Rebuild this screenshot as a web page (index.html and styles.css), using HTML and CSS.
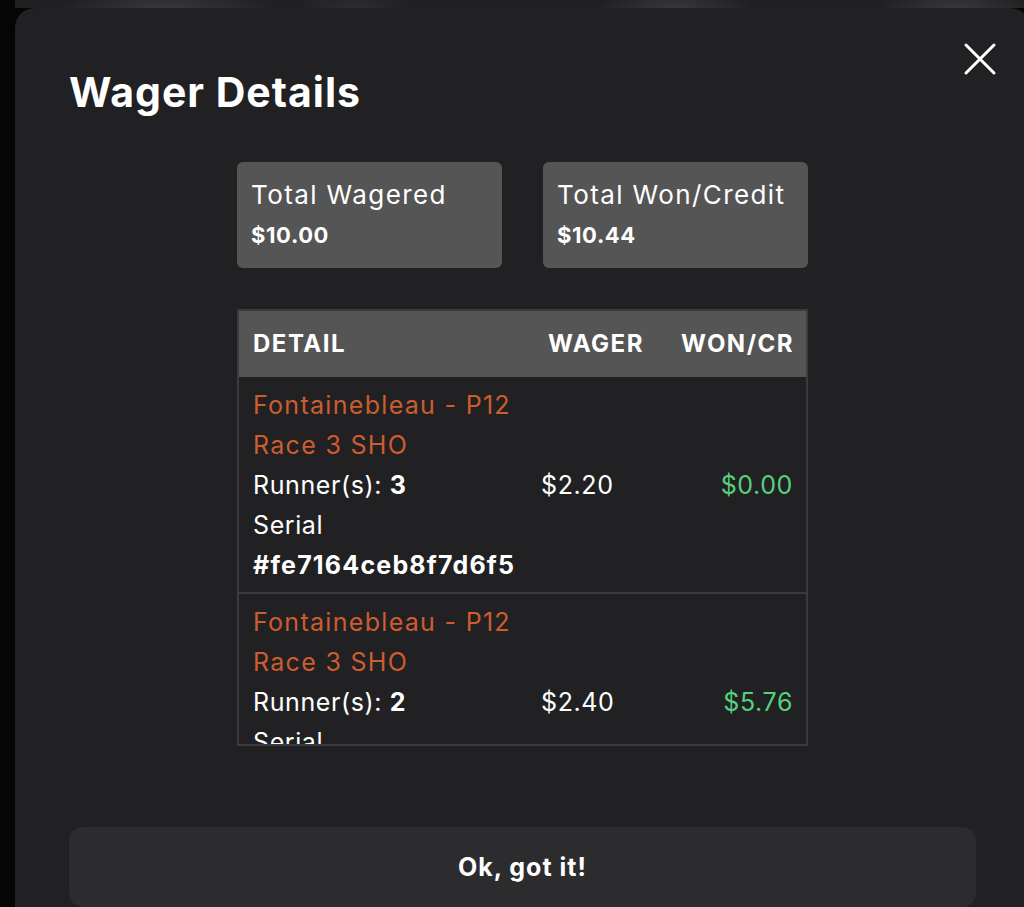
FILE: index.html
```html
<!DOCTYPE html>
<html lang="en">
<head>
    <meta charset="UTF-8">
    <meta name="viewport" content="width=device-width, initial-scale=1.0">
    <title>Wager Details</title>
    <link rel="stylesheet" href="styles.css">
</head>
<body>
    <div class="backdrop"></div>
    <div class="modal">
        <button class="close-btn" aria-label="Close">
            <svg width="34" height="34" viewBox="0 0 34 34">
                <path d="M3 3 L31 31 M31 3 L3 31" stroke="#fff" stroke-width="3" stroke-linecap="round" fill="none"/>
            </svg>
        </button>
        <h1 class="title">Wager Details</h1>
        <div class="totals">
            <div class="total-card">
                <div class="label">Total Wagered</div>
                <div class="amount">$10.00</div>
            </div>
            <div class="total-card">
                <div class="label">Total Won/Credit</div>
                <div class="amount">$10.44</div>
            </div>
        </div>
        <div class="table-wrap">
            <table class="wagers">
                <thead>
                    <tr>
                        <th class="col-detail">Detail</th>
                        <th class="col-wager">Wager</th>
                        <th class="col-won">Won/Cr</th>
                    </tr>
                </thead>
                <tbody>
                    <tr>
                        <td class="col-detail">
                            <div class="race">Fontainebleau - P12</div>
                            <div class="race">Race 3 SHO</div>
                            <div>Runner(s): <b>3</b></div>
                            <div>Serial</div>
                            <div><b>#fe7164ceb8f7d6f5</b></div>
                        </td>
                        <td class="col-wager">$2.20</td>
                        <td class="col-won">$0.00</td>
                    </tr>
                    <tr>
                        <td class="col-detail">
                            <div class="race">Fontainebleau - P12</div>
                            <div class="race">Race 3 SHO</div>
                            <div>Runner(s): <b>2</b></div>
                            <div>Serial</div>
                            <div><b>#a93c10d2e64b7f08</b></div>
                        </td>
                        <td class="col-wager">$2.40</td>
                        <td class="col-won">$5.76</td>
                    </tr>
                </tbody>
            </table>
        </div>
        <button class="ok-btn">Ok, got it!</button>
    </div>
</body>
</html>
```

FILE: styles.css
```css
* {
    margin: 0;
    padding: 0;
    box-sizing: border-box;
    font-family: 'Inter', 'DejaVu Sans', sans-serif;
}
body {
    height: 907px;
    background: #050505;
    color: #fff;
    overflow: hidden;
}
.backdrop {
    height: 8px;
    margin-left: 15px;
    background:
        radial-gradient(ellipse 110px 20px at 150px 8px, #39393b, transparent),
        radial-gradient(ellipse 60px 20px at 340px 8px, #2e2e30, transparent),
        radial-gradient(ellipse 80px 20px at 660px 8px, #38383a, transparent),
        radial-gradient(ellipse 80px 20px at 940px 8px, #38383a, transparent),
        #202022;
}
.modal {
    position: relative;
    width: 1015px;
    height: 920px;
    margin-left: 15px;
    padding: 0 54px;
    background: #212123;
    border-radius: 20px 20px 0 0;
}
.close-btn {
    position: absolute;
    top: 34px;
    right: 33px;
    background: none;
    border: none;
    cursor: pointer;
    display: flex;
}
.title {
    padding-top: 60px;
    font-size: 41px;
    font-weight: 700;
    line-height: 48px;
    letter-spacing: 1px;
}
.totals {
    display: flex;
    justify-content: center;
    gap: 41px;
    margin-top: 46px;
}
.total-card {
    width: 265px;
    height: 106px;
    padding: 13px 14px;
    background: #555555;
    border-radius: 6px;
}
.label {
    font-size: 26px;
    line-height: 40px;
    letter-spacing: 1.4px;
}
.amount {
    font-size: 22px;
    font-weight: 700;
    line-height: 40px;
    letter-spacing: 0.6px;
}
.table-wrap {
    width: 571px;
    height: 437px;
    margin: 41px auto 0;
    border: 2px solid #3b3b3d;
    overflow: hidden;
}
.wagers {
    width: 100%;
    table-layout: fixed;
    border-collapse: collapse;
    font-size: 25px;
    line-height: 40px;
    letter-spacing: 0.6px;
}
.wagers th {
    height: 66px;
    background: #555555;
    font-size: 24px;
    font-weight: 700;
    letter-spacing: 1.5px;
    text-transform: uppercase;
    text-align: left;
    padding: 0 12px 0 14px;
    white-space: nowrap;
}
.wagers td {
    padding: 8px 14px 7px;
    vertical-align: middle;
    border-bottom: 2px solid #3b3b3d;
    white-space: nowrap;
}
.col-detail {
    width: 288px;
}
.col-wager {
    width: 134px;
}
.wagers th.col-wager {
    padding-left: 21px;
}
.col-won {
    text-align: right !important;
}
td.col-won {
    color: #55d07d;
    padding-right: 13px;
}
.race {
    color: #cd5c2f;
    letter-spacing: 1.3px;
}
.wagers b {
    font-weight: 700;
    letter-spacing: 1.2px;
}
.ok-btn {
    display: block;
    width: 100%;
    height: 80px;
    margin-top: 81px;
    background: #2c2c2e;
    border: none;
    border-radius: 14px;
    color: #fff;
    font-size: 25px;
    font-weight: 700;
    letter-spacing: 1px;
    cursor: pointer;
}
```
